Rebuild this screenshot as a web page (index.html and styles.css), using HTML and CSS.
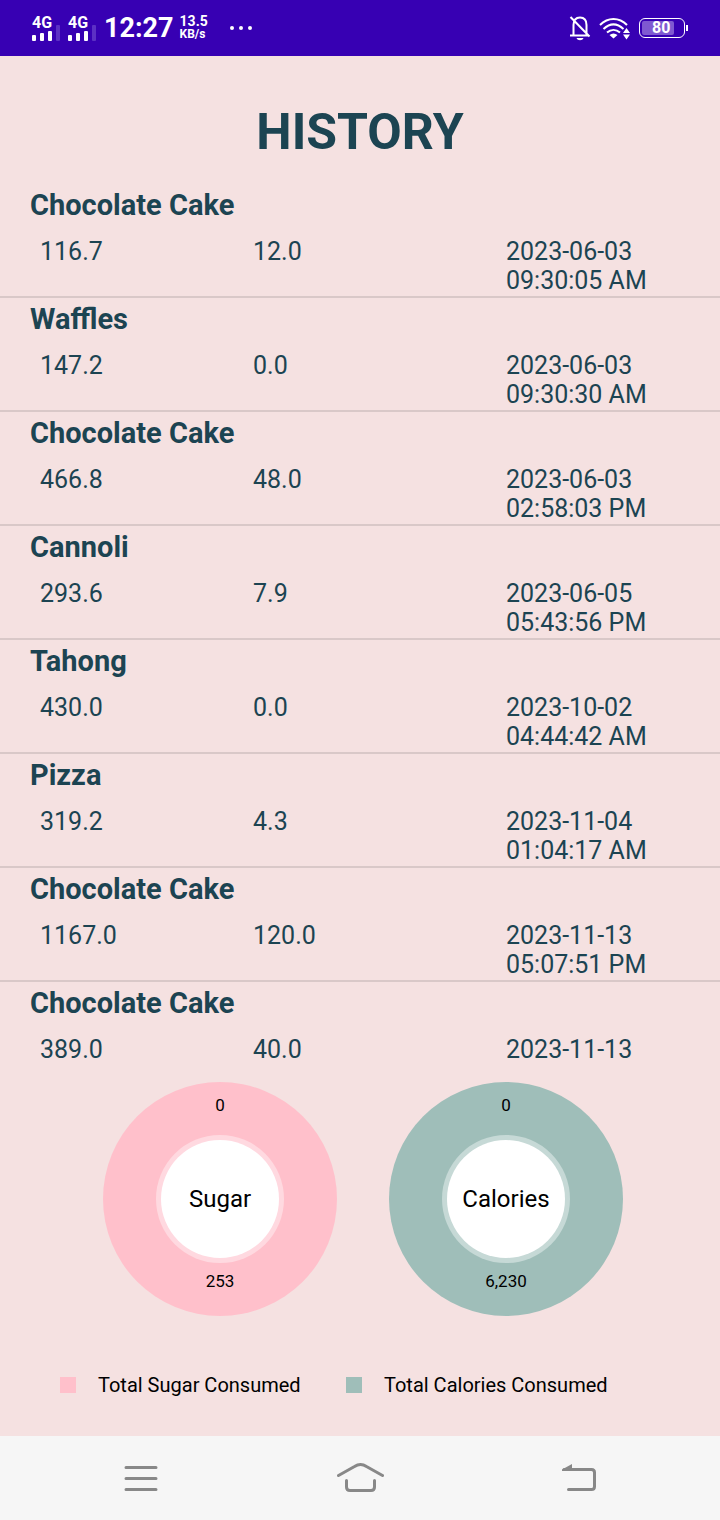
FILE: index.html
```html
<!DOCTYPE html>
<html lang="en">
<head>
<meta charset="utf-8">
<meta name="viewport" content="width=device-width, initial-scale=1">
<title>History</title>
<link rel="stylesheet" href="styles.css">
</head>
<body class="screen">
<header class="status">
  <div class="signal">
    <span class="signal-label">4G</span>
    <svg class="signal-bars" width="29" height="17" viewBox="0 0 29 17"><g fill="#fff"><rect x="0" y="10" width="4" height="6" rx="1"/><rect x="8" y="8" width="4" height="8" rx="1"/><rect x="16" y="6" width="4" height="10" rx="1"/></g><rect x="24" y="0" width="4" height="16" rx="1" fill="#5c30c4"/></svg>
  </div>
  <div class="signal">
    <span class="signal-label">4G</span>
    <svg class="signal-bars" width="29" height="17" viewBox="0 0 29 17"><g fill="#fff"><rect x="0" y="10" width="4" height="6" rx="1"/><rect x="8" y="8" width="4" height="8" rx="1"/><rect x="16" y="6" width="4" height="10" rx="1"/></g><rect x="24" y="0" width="4" height="16" rx="1" fill="#5c30c4"/></svg>
  </div>
  <time class="clock">12:27</time>
  <div class="speed"><span class="speed-value">13.5</span><span class="speed-unit">KB/s</span></div>
  <svg class="more" width="22" height="4" viewBox="0 0 22 4" fill="#fff"><circle cx="2" cy="2" r="2"/><circle cx="11" cy="2" r="2"/><circle cx="20" cy="2" r="2"/></svg>
  <div class="status-right">
    <svg width="22" height="26" viewBox="0 0 22 26" fill="none" stroke="#fff" stroke-width="2"><path d="M4.500 20V10C4.500 5 7 2.500 11 2.500S17.500 5 17.500 10V20M1 20.500H20M1.500 2L20.500 21.500"/><path d="M7.500 23H14.500C13.500 26 8.500 26 7.500 23Z" fill="#fff" stroke="none"/></svg>
    <svg width="32" height="24" viewBox="0 0 32 24" fill="none" stroke="#fff" stroke-width="2"><path d="M1 9C9 1 20 1 28 9M4.500 13C11 7 18 7 24.500 13M8 16.500C12 13 17 13 21 16.500"/><path d="M10.500 19C13 17 16 17 18.500 19L14.500 22.500ZM24 17L27.500 12 31 17ZM24 18.500L27.500 23.500 31 18.500Z" fill="#fff" stroke="none"/></svg>
    <div class="battery"><span class="battery-level">80</span></div>
  </div>
</header>

<main class="main">
  <h1 class="title">HISTORY</h1>
  <ul class="history">
    <li class="entry"><h2 class="food">Chocolate Cake</h2><div class="facts"><span>116.7</span><span>12.0</span><time class="when"><span>2023-06-03</span> <span>09:30:05 AM</span></time></div></li>
    <li class="entry"><h2 class="food">Waffles</h2><div class="facts"><span>147.2</span><span>0.0</span><time class="when"><span>2023-06-03</span> <span>09:30:30 AM</span></time></div></li>
    <li class="entry"><h2 class="food">Chocolate Cake</h2><div class="facts"><span>466.8</span><span>48.0</span><time class="when"><span>2023-06-03</span> <span>02:58:03 PM</span></time></div></li>
    <li class="entry"><h2 class="food">Cannoli</h2><div class="facts"><span>293.6</span><span>7.9</span><time class="when"><span>2023-06-05</span> <span>05:43:56 PM</span></time></div></li>
    <li class="entry"><h2 class="food">Tahong</h2><div class="facts"><span>430.0</span><span>0.0</span><time class="when"><span>2023-10-02</span> <span>04:44:42 AM</span></time></div></li>
    <li class="entry"><h2 class="food">Pizza</h2><div class="facts"><span>319.2</span><span>4.3</span><time class="when"><span>2023-11-04</span> <span>01:04:17 AM</span></time></div></li>
    <li class="entry"><h2 class="food">Chocolate Cake</h2><div class="facts"><span>1167.0</span><span>120.0</span><time class="when"><span>2023-11-13</span> <span>05:07:51 PM</span></time></div></li>
    <li class="entry"><h2 class="food">Chocolate Cake</h2><div class="facts"><span>389.0</span><span>40.0</span><time class="when"><span>2023-11-13</span></time></div></li>
  </ul>
  <section class="charts">
    <figure class="chart">
      <svg class="donut" viewBox="0 0 234 234">
        <circle cx="117" cy="117" r="117" fill="#ffc0cb"/>
        <circle cx="117" cy="117" r="64" fill="#ffd9e0"/>
        <circle cx="117" cy="117" r="59" fill="#fff"/>
        <text class="donut-value" x="117" y="29">0</text>
        <text class="donut-name" x="117" y="125">Sugar</text>
        <text class="donut-value" x="117" y="205">253</text>
      </svg>
      <figcaption class="legend"><span class="swatch swatch-sugar"></span>Total Sugar Consumed</figcaption>
    </figure>
    <figure class="chart">
      <svg class="donut" viewBox="0 0 234 234">
        <circle cx="117" cy="117" r="117" fill="#9fbeb9"/>
        <circle cx="117" cy="117" r="64" fill="#c6d9d6"/>
        <circle cx="117" cy="117" r="59" fill="#fff"/>
        <text class="donut-value" x="117" y="29">0</text>
        <text class="donut-name" x="117" y="125">Calories</text>
        <text class="donut-value" x="117" y="205">6,230</text>
      </svg>
      <figcaption class="legend"><span class="swatch swatch-calories"></span>Total Calories Consumed</figcaption>
    </figure>
  </section>
</main>

<nav class="nav">
  <button class="nav-button" type="button" aria-label="Recent apps"><svg width="48" height="32" viewBox="0 0 48 32"><path d="M10 5.500H40M10 16.500H40M10 27.500H40"/></svg></button>
  <button class="nav-button" type="button" aria-label="Home"><svg width="48" height="32" viewBox="0 0 48 32"><path d="M2.500 13.500L18.500 4.500Q24.500 0.500 30.500 4.500L46.500 13.500M10.500 18.500V25Q10.500 28.500 14 28.500H35Q38.500 28.500 38.500 25V18.500"/></svg></button>
  <button class="nav-button" type="button" aria-label="Back"><svg width="48" height="32" viewBox="0 0 48 32"><path d="M8 7.500H35.500Q38.500 7.500 38.500 10.500V24.500Q38.500 27.500 35.500 27.500H12.500"/><path class="arrow" d="M6 7.500L16 2V9H6Z"/></svg></button>
</nav>
</body>
</html>
```

FILE: styles.css
```css
* {
  box-sizing: border-box;
}

.screen {
  display: flex;
  flex-direction: column;
  height: 100vh;
  margin: 0;
  background: #f5e1e1;
  color: #1c4452;
  font-family: Roboto, "Liberation Sans", sans-serif;
}

.status {
  display: flex;
  align-items: center;
  flex: none;
  height: 56px;
  padding: 0 35px 0 32px;
  background: #3700b3;
  color: #fff;
  font-weight: 700;
}

.signal {
  display: grid;
  width: 36px;
}

.signal-label,
.signal-bars {
  grid-area: 1 / 1;
}

.signal-label {
  font-size: 16px;
  line-height: 16px;
}

.signal-bars {
  align-self: end;
  margin-top: 10px;
}

.clock {
  font-size: 27px;
  line-height: 32px;
}

.speed {
  display: flex;
  flex-direction: column;
  margin-left: 6px;
  line-height: 13px;
}

.speed-value {
  font-size: 14px;
}

.speed-unit {
  font-size: 12px;
}

.more {
  margin-left: 22px;
}

.status-right {
  display: flex;
  align-items: center;
  gap: 8px;
  margin-left: auto;
}

.battery {
  position: relative;
  width: 46px;
  height: 20px;
  padding: 2px;
  border: 1px solid #fff;
  border-radius: 6px;
}

.battery::after {
  content: "";
  position: absolute;
  top: 6px;
  right: -4px;
  width: 2px;
  height: 6px;
  background: #fff;
}

.battery-level {
  display: block;
  width: 32px;
  padding-left: 10px;
  border-radius: 2px;
  background: #7f59d1;
  font-size: 16px;
  line-height: 14px;
}

.main {
  display: flex;
  flex: 1;
  flex-direction: column;
  min-height: 0;
  padding-top: 47px;
}

.title {
  margin: 0 0 23px;
  font-size: 50px;
  line-height: 58px;
  text-align: center;
}

.history {
  flex: 1;
  min-height: 0;
  margin: 0;
  padding: 0;
  overflow: hidden;
  list-style: none;
}

.entry {
  padding-top: 4px;
  border-bottom: 2px solid #d9c8c8;
}

.entry:last-child {
  border-bottom: 0;
}

.food {
  margin: 0 30px 15px;
  font-size: 29px;
  line-height: 34px;
}

.facts {
  display: grid;
  grid-template-columns: 213fr 253fr 214fr;
  min-height: 59px;
  padding-left: 40px;
  font-size: 25px;
  line-height: 29px;
}

.when span {
  display: block;
}

.charts {
  display: grid;
  grid-template-columns: 1fr 1fr;
  flex: none;
  padding: 16px 88px 38px 60px;
  color: #000;
}

.chart {
  margin: 0;
}

.donut {
  display: block;
  width: 234px;
  height: 234px;
  margin-left: 43px;
}

.donut-name,
.donut-value {
  text-anchor: middle;
}

.donut-name {
  font-size: 24px;
}

.donut-value {
  font-size: 17px;
}

.legend {
  display: flex;
  align-items: center;
  gap: 22px;
  margin-top: 56px;
  font-size: 20px;
  line-height: 26px;
  white-space: nowrap;
}

.swatch {
  width: 16px;
  height: 16px;
}

.swatch-sugar {
  background: #ffc0cb;
}

.swatch-calories {
  background: #9fbeb9;
}

.nav {
  display: grid;
  grid-template-columns: repeat(3, 1fr);
  flex: none;
  height: 84px;
  padding: 0 30px;
  background: #f6f6f6;
}

.nav-button {
  display: flex;
  align-items: center;
  justify-content: center;
  border: 0;
  background: none;
}

.nav-button path {
  fill: none;
  stroke: #888;
  stroke-width: 3;
  stroke-linecap: round;
}

.nav-button .arrow {
  fill: #888;
  stroke: none;
}
```
